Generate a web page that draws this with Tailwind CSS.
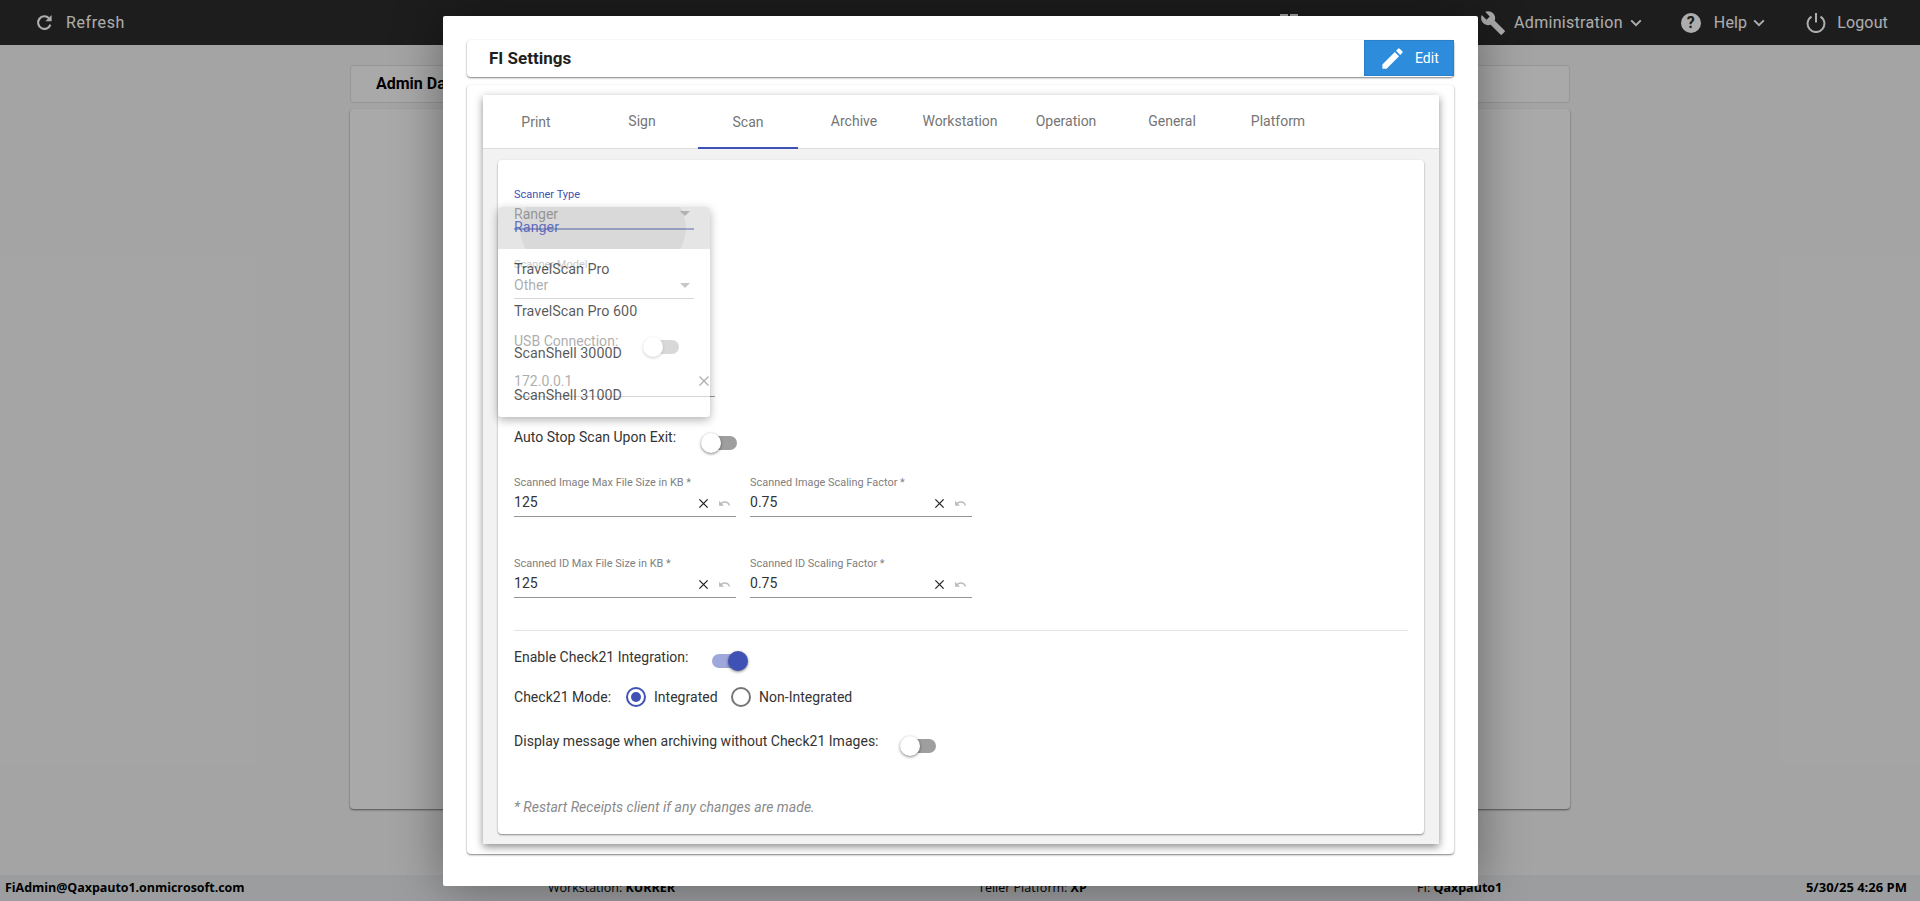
<!DOCTYPE html>
<html lang="en">
<head>
<meta charset="utf-8">
<title>FI Settings</title>
<script src="https://cdn.jsdelivr.net/npm/@tailwindcss/browser@4"></script>
</head>
<body class="font-['Roboto',sans-serif]">
<div class="relative w-[1920px] h-[901px] overflow-hidden bg-[#f2f2f2] flex flex-col">
  <!-- top bar -->
  <header class="h-[45px] shrink-0 bg-[#2b2b2b] text-[#fff] flex items-center text-[16px] pl-[36px]">
    <svg class="w-[17px] h-[17px] mr-[13px]" viewBox="0 0 17 17" fill="none"><path d="M14.4 10.6A6.3 6.3 0 1 1 13 4.2" stroke="#fff" stroke-width="2.2"/><path d="M15.6 1v6.2H9.4z" fill="#fff"/></svg>
    <span class="tracking-[.6px]">Refresh</span>
    <span class="absolute left-[1280px] top-[14px] flex gap-[2px]"><i class="block w-[8px] h-[4px] bg-white"></i><i class="block w-[8px] h-[4px] bg-white"></i></span>
    <div class="ml-auto flex items-center pr-[32px]">
      <svg class="w-[26px] h-[26px] mr-[8px]" viewBox="0 0 24 24" fill="#fff"><path d="M22.7 19l-9.1-9.1c.9-2.3.4-5-1.5-6.9-2-2-5-2.4-7.4-1.3L9 6 6 9 1.6 4.7C.4 7.1.9 10.1 2.9 12.1c1.9 1.9 4.6 2.4 6.9 1.5l9.1 9.1c.4.4 1 .4 1.4 0l2.3-2.3c.5-.4.5-1.1.1-1.4z"/></svg>
      <span class="tracking-[.3px]">Administration</span>
      <svg class="w-[12px] h-[8px] ml-[7px]" viewBox="0 0 12 8" fill="none"><path d="M1.2 1.4 6 6.2l4.8-4.8" stroke="#fff" stroke-width="2"/></svg>
      <span class="ml-[39px] w-[20px] h-[20px] rounded-full bg-[#fff] text-[#2b2b2b] text-[16px] leading-[20px] font-bold text-center">?</span>
      <span class="ml-[13px] tracking-[.15px]">Help</span>
      <svg class="w-[12px] h-[8px] ml-[6px]" viewBox="0 0 12 8" fill="none"><path d="M1.2 1.4 6 6.2l4.8-4.8" stroke="#fff" stroke-width="2"/></svg>
      <svg class="ml-[41px] w-[20px] h-[21px] mr-[11px]" viewBox="0 0 20 21" fill="none"><path d="M5.5 4.6a8.4 8.4 0 1 0 9 0M10 1v9.5" stroke="#fff" stroke-width="2"/></svg>
      <span class="tracking-[.15px]">Logout</span>
    </div>
  </header>

  <!-- page behind the dialog -->
  <main class="flex-1 flex flex-col items-center pt-[20px]">
    <div class="w-[1220px] h-[38px] bg-[#fafafa] rounded border border-[#ddd] flex items-center pl-[25px] font-bold text-[16px] text-black">Admin Dashboard</div>
    <div class="w-[1220px] h-[700px] mt-[6px] bg-[#fafafa] rounded shadow-[0_1px_2px_rgba(0,0,0,.5)]"></div>
  </main>

  <!-- status bar -->
  <footer class="h-[26px] shrink-0 bg-[#e6e8ea] relative text-[12.5px] text-black font-['Open_Sans',sans-serif]">
    <div class="flex items-center h-full pl-[5px] pr-[13px]">
      <b class="w-[543px] tracking-[-0.05px]">FiAdmin@Qaxpauto1.onmicrosoft.com</b>
      <span class="w-[430px]">Workstation: <b>KURRER</b></span>
      <span class="w-[439px]">Teller Platform: <b>XP</b></span>
      <span>FI: <b>Qaxpauto1</b></span>
      <b class="ml-auto text-[13px]">5/30/25 4:26 PM</b>
    </div>
  </footer>

  <!-- backdrop -->
  <div class="absolute inset-0 bg-black/32"></div>

  <!-- dialog -->
  <section class="absolute left-[443px] top-[16px] w-[1035px] h-[870px] bg-white rounded-[2px] shadow-[0_0_50px_rgba(0,0,0,.4)] px-[24px] pt-[24px]">
    <div class="h-[37px] rounded bg-white shadow-[0_1px_2px_rgba(0,0,0,.5)] flex items-start justify-between pl-[22px]">
      <h2 class="font-bold text-[17px] leading-[36px] text-[#1f1f1f]">FI Settings</h2>
      <button class="w-[90px] h-[36px] bg-[#2d8cdc] border border-[#2a7fc8] text-white text-[14px] flex items-center pl-[14px]">
        <svg class="w-[27px] h-[27px] mr-[9px]" viewBox="0 0 24 24" fill="#fff"><path d="M3 17.25V21h3.75L17.81 9.94l-3.75-3.75L3 17.25zM20.71 7.04a.996.996 0 0 0 0-1.41l-2.34-2.34a.996.996 0 0 0-1.41 0l-1.83 1.83 3.75 3.75 1.83-1.83z"/></svg>
        Edit
      </button>
    </div>

    <div class="mt-[8px] h-[769px] rounded bg-white shadow-[0_1px_2px_rgba(0,0,0,.5)] pl-[16px] pr-[15px] pt-[10px]">
      <div class="h-[749px] bg-[#f2f2f2] shadow-[0_3px_8px_rgba(0,0,0,.45)] flex flex-col">
        <!-- tabs -->
        <nav class="h-[54px] shrink-0 bg-white border-b border-[#ddd] flex text-[14px] text-[#757575]">
          <a class="w-[106px] flex items-center justify-center pt-[2px]">Print</a>
          <a class="w-[106px] flex items-center justify-center">Sign</a>
          <a class="w-[106px] h-[54px] flex items-center justify-center relative">Scan<i class="absolute bottom-0 left-[3px] right-[3px] h-[2px] bg-[#3f51b5]"></i></a>
          <a class="w-[106px] flex items-center justify-center">Archive</a>
          <a class="w-[106px] flex items-center justify-center">Workstation</a>
          <a class="w-[106px] flex items-center justify-center">Operation</a>
          <a class="w-[106px] flex items-center justify-center">General</a>
          <a class="w-[106px] flex items-center justify-center">Platform</a>
        </nav>

        <div class="px-[15px] pt-[11px] pb-[10px] flex-1 flex">
          <!-- form card -->
          <form class="relative flex-1 bg-white rounded shadow-[0_1px_2px_rgba(0,0,0,.45)] px-[16px] pt-[28px] text-[14px] tracking-[.02px] text-[#333]">
            <div class="text-[11px] leading-[13px] text-[#3f51b5]">Scanner Type</div>
            <div class="w-[180px] h-[22px] mt-[7px] relative border-b-2 border-[#3f51b5] leading-[13px]">Ranger<i class="absolute right-[4px] top-[3px] border-x-[5px] border-x-transparent border-t-[5px] border-t-[#757575]"></i></div>

            <div class="text-[11px] leading-[13px] text-[#777] mt-[28px]">Scanner Model</div>
            <div class="w-[180px] h-[22px] mt-[6px] relative border-b border-[#999] leading-[16px]">Other<i class="absolute right-[4px] top-[6px] border-x-[5px] border-x-transparent border-t-[5px] border-t-[#757575]"></i></div>

            <div class="flex mt-[33px] h-[18px] items-center">
              <span class="w-[137px]">USB Connection:</span>
              <span class="relative w-[28px] h-[14px] rounded-full bg-[#9e9e9e] mt-[11px]"><i class="absolute -left-[8px] -top-[3px] w-[20px] h-[20px] rounded-full bg-white shadow-[0_1px_3px_rgba(0,0,0,.5)]"></i></span>
            </div>

            <div class="w-[201px] h-[26px] mt-[21px] relative border-b border-[#999] leading-[21px]">172.0.0.1
              <svg class="absolute right-[5px] top-[4px] w-[12px] h-[12px]" viewBox="0 0 12 12" fill="none"><path d="M1.5 1.5l9 9M10.5 1.5l-9 9" stroke="#333" stroke-width="1.3"/></svg>
            </div>

            <div class="flex mt-[32px] h-[20px] items-center">
              <span class="w-[195px] -mt-[4px]">Auto Stop Scan Upon Exit:</span>
              <span class="relative w-[28px] h-[14px] rounded-full bg-[#9e9e9e] mt-[8px]"><i class="absolute -left-[8px] -top-[3px] w-[20px] h-[20px] rounded-full bg-white shadow-[0_1px_3px_rgba(0,0,0,.5)]"></i></span>
            </div>

            <!-- number fields row 1 -->
            <div class="flex gap-[14px] mt-[27px]">
              <div class="w-[222px]">
                <div class="text-[10.9px] leading-[13px] text-[#808080]">Scanned Image Max File Size in KB *</div>
                <div class="h-[22px] mt-[6px] relative border-b border-[#949494] leading-[15px]">125
                  <svg class="absolute right-[27px] top-[3px] w-[11px] h-[11px]" viewBox="0 0 12 12" fill="none"><path d="M1.5 1.5l9 9M10.5 1.5l-9 9" stroke="#222" stroke-width="1.4"/></svg>
                  <svg class="absolute right-[5px] top-[2px] w-[13px] h-[13px]" viewBox="0 0 24 24" fill="#bbb"><path d="M12.5 8c-2.65 0-5.05.99-6.9 2.6L2 7v9h9l-3.62-3.62c1.39-1.16 3.16-1.88 5.12-1.88 3.54 0 6.55 2.31 7.6 5.5l2.37-.78C21.08 11.03 17.15 8 12.5 8z"/></svg>
                </div>
              </div>
              <div class="w-[222px]">
                <div class="text-[10.9px] leading-[13px] text-[#808080]">Scanned Image Scaling Factor *</div>
                <div class="h-[22px] mt-[6px] relative border-b border-[#949494] leading-[15px]">0.75
                  <svg class="absolute right-[27px] top-[3px] w-[11px] h-[11px]" viewBox="0 0 12 12" fill="none"><path d="M1.5 1.5l9 9M10.5 1.5l-9 9" stroke="#222" stroke-width="1.4"/></svg>
                  <svg class="absolute right-[5px] top-[2px] w-[13px] h-[13px]" viewBox="0 0 24 24" fill="#bbb"><path d="M12.5 8c-2.65 0-5.05.99-6.9 2.6L2 7v9h9l-3.62-3.62c1.39-1.16 3.16-1.88 5.12-1.88 3.54 0 6.55 2.31 7.6 5.5l2.37-.78C21.08 11.03 17.15 8 12.5 8z"/></svg>
                </div>
              </div>
            </div>

            <!-- number fields row 2 -->
            <div class="flex gap-[14px] mt-[40px]">
              <div class="w-[222px]">
                <div class="text-[10.9px] leading-[13px] text-[#808080]">Scanned ID Max File Size in KB *</div>
                <div class="h-[22px] mt-[6px] relative border-b border-[#949494] leading-[15px]">125
                  <svg class="absolute right-[27px] top-[3px] w-[11px] h-[11px]" viewBox="0 0 12 12" fill="none"><path d="M1.5 1.5l9 9M10.5 1.5l-9 9" stroke="#222" stroke-width="1.4"/></svg>
                  <svg class="absolute right-[5px] top-[2px] w-[13px] h-[13px]" viewBox="0 0 24 24" fill="#bbb"><path d="M12.5 8c-2.65 0-5.05.99-6.9 2.6L2 7v9h9l-3.62-3.62c1.39-1.16 3.16-1.88 5.12-1.88 3.54 0 6.55 2.31 7.6 5.5l2.37-.78C21.08 11.03 17.15 8 12.5 8z"/></svg>
                </div>
              </div>
              <div class="w-[222px]">
                <div class="text-[10.9px] leading-[13px] text-[#808080]">Scanned ID Scaling Factor *</div>
                <div class="h-[22px] mt-[6px] relative border-b border-[#949494] leading-[15px]">0.75
                  <svg class="absolute right-[27px] top-[3px] w-[11px] h-[11px]" viewBox="0 0 12 12" fill="none"><path d="M1.5 1.5l9 9M10.5 1.5l-9 9" stroke="#222" stroke-width="1.4"/></svg>
                  <svg class="absolute right-[5px] top-[2px] w-[13px] h-[13px]" viewBox="0 0 24 24" fill="#bbb"><path d="M12.5 8c-2.65 0-5.05.99-6.9 2.6L2 7v9h9l-3.62-3.62c1.39-1.16 3.16-1.88 5.12-1.88 3.54 0 6.55 2.31 7.6 5.5l2.37-.78C21.08 11.03 17.15 8 12.5 8z"/></svg>
                </div>
              </div>
            </div>

            <div class="h-px bg-[#e4e4e4] mt-[32px]"></div>

            <div class="flex mt-[16px] h-[20px] items-center">
              <span class="w-[198px]">Enable Check21 Integration:</span>
              <span class="relative w-[28px] h-[14px] rounded-full bg-[#9fa8da] mt-[7px]"><i class="absolute -right-[8px] -top-[3px] w-[20px] h-[20px] rounded-full bg-[#3f51b5] shadow-[0_1px_3px_rgba(0,0,0,.5)]"></i></span>
            </div>

            <div class="flex mt-[20px] h-[20px] items-center">
              <span class="w-[112px]">Check21 Mode:</span>
              <span class="w-[20px] h-[20px] rounded-full border-2 border-[#3f51b5] flex items-center justify-center"><i class="block w-[10px] h-[10px] rounded-full bg-[#3f51b5]"></i></span>
              <span class="ml-[8px] w-[77px]">Integrated</span>
              <span class="w-[20px] h-[20px] rounded-full border-2 border-[#757575]"></span>
              <span class="ml-[8px]">Non-Integrated</span>
            </div>

            <div class="flex mt-[24px] h-[20px] items-center">
              <span class="w-[394px]">Display message when archiving without Check21 Images:</span>
              <span class="relative w-[28px] h-[14px] rounded-full bg-[#9e9e9e] mt-[9px]"><i class="absolute -left-[8px] -top-[3px] w-[20px] h-[20px] rounded-full bg-white shadow-[0_1px_3px_rgba(0,0,0,.5)]"></i></span>
            </div>

            <p class="mt-[46px] italic text-[#8a8a8a]">* Restart Receipts client if any changes are made.</p>

            <!-- open select menu, mid fade -->
            <ul class="absolute left-0 top-[47px] w-[212px] h-[210px] bg-white/60 rounded shadow-[0_3px_10px_rgba(0,0,0,.3)] text-[#222]/75 text-[14.3px] overflow-hidden">
              <li class="h-[42px] px-[16px] flex items-center text-[#3f51b5]/80 bg-black/10 relative overflow-hidden"><i class="absolute left-[22px] right-[24px] -top-[20px] -bottom-[20px] rounded-[50px] bg-black/5"></i><span class="relative">Ranger</span></li>
              <li class="h-[42px] px-[16px] flex items-center">TravelScan Pro</li>
              <li class="h-[42px] px-[16px] flex items-center">TravelScan Pro 600</li>
              <li class="h-[42px] px-[16px] flex items-center">ScanShell 3000D</li>
              <li class="h-[42px] px-[16px] flex items-center">ScanShell 3100D</li>
            </ul>
          </form>
        </div>
      </div>
    </div>
  </section>
</div>
</body>
</html>
